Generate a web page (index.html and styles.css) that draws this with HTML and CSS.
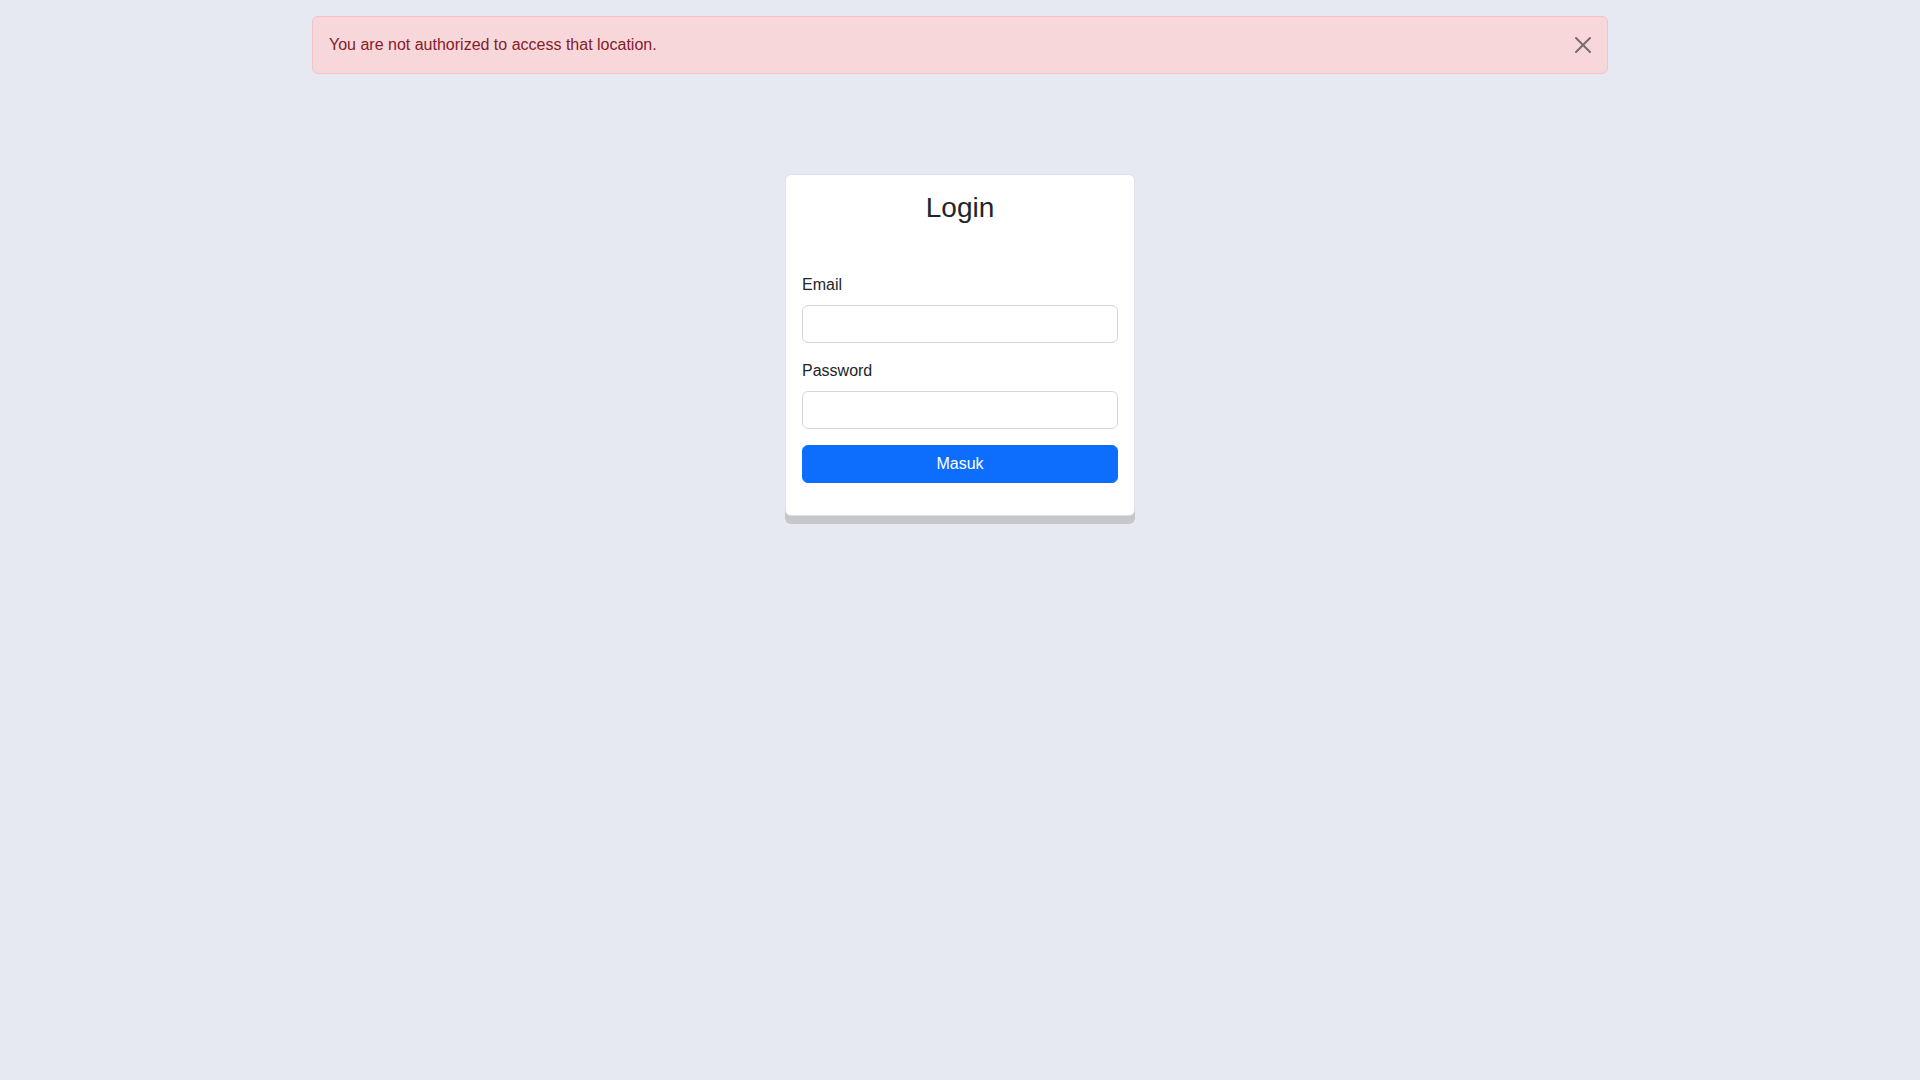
FILE: index.html
```html
<!DOCTYPE html>
<html lang="en">
<head>
<meta charset="utf-8">
<title>Login</title>
<link rel="stylesheet" href="styles.css">
</head>
<body>
<div class="container">
  <div class="alert" role="alert">
    <span class="alert-text">You are not authorized to access that location.</span>
    <button class="btn-close" type="button" aria-label="Close">
      <svg viewBox="0 0 16 16" width="16" height="16" aria-hidden="true"><path d="M.293.293a1 1 0 0 1 1.414 0L8 6.586 14.293.293a1 1 0 1 1 1.414 1.414L9.414 8l6.293 6.293a1 1 0 0 1-1.414 1.414L8 9.414l-6.293 6.293a1 1 0 0 1-1.414-1.414L6.586 8 .293 1.707a1 1 0 0 1 0-1.414z"/></svg>
    </button>
  </div>

  <div class="card">
    <h3 class="card-title">Login</h3>
    <form class="login-form">
      <label class="form-label label-email" for="email">Email</label>
      <input class="form-control" id="email" type="email">
      <label class="form-label label-password" for="password">Password</label>
      <input class="form-control" id="password" type="password">
      <button class="btn-primary" type="button">Masuk</button>
    </form>
  </div>
</div>
</body>
</html>
```

FILE: styles.css
```css
* { box-sizing: border-box; }

html, body {
  margin: 0;
  padding: 0;
}

body {
  background: #e6e9f1;
  font-family: "Liberation Sans", Arial, sans-serif;
  font-size: 16px;
  line-height: 1.5;
  color: #212529;
  min-height: 1080px;
}

.container {
  width: 1296px;
  margin: 0 auto;
  padding-top: 16px;
}

.alert {
  position: relative;
  background: #f8d7da;
  border: 1px solid #f5c2c7;
  border-radius: 6px;
  color: #842029;
  padding: 16px 48px 16px 16px;
  line-height: 24px;
}

.btn-close {
  position: absolute;
  top: 0;
  right: 0;
  width: 48px;
  height: 56px;
  padding: 0;
  border: 0;
  background: transparent;
  display: flex;
  align-items: center;
  justify-content: center;
  cursor: pointer;
}

.btn-close svg {
  display: block;
  fill: #000;
  opacity: 0.5;
}

.card {
  width: 350px;
  margin: 100px auto 0;
  background: #fff;
  border: 1px solid #dde0e5;
  border-radius: 6px;
  box-shadow: 0 8px 0 #c6c7cb;
  padding: 16px 16px 32px;
}

.card-title {
  margin: 0 0 48px;
  font-size: 28px;
  font-weight: 400;
  line-height: 1.2;
  text-align: center;
  color: #212529;
}

.login-form {
  display: flex;
  flex-direction: column;
}

.form-label {
  display: block;
  line-height: 24px;
}

.label-email {
  margin-bottom: 8px;
}

.label-password {
  margin-top: 16px;
  margin-bottom: 8px;
}

.form-control {
  display: block;
  width: 100%;
  height: 38px;
  border: 1px solid #d3d7dc;
  border-radius: 6px;
  background: #fff;
  padding: 6px 12px;
  font: inherit;
}

.btn-primary {
  display: block;
  width: 100%;
  height: 38px;
  margin-top: 16px;
  border: 1px solid #0d6efd;
  border-radius: 6px;
  background: #0d6efd;
  color: #fff;
  font: inherit;
  line-height: 24px;
  padding: 6px 12px;
  cursor: pointer;
}
```
